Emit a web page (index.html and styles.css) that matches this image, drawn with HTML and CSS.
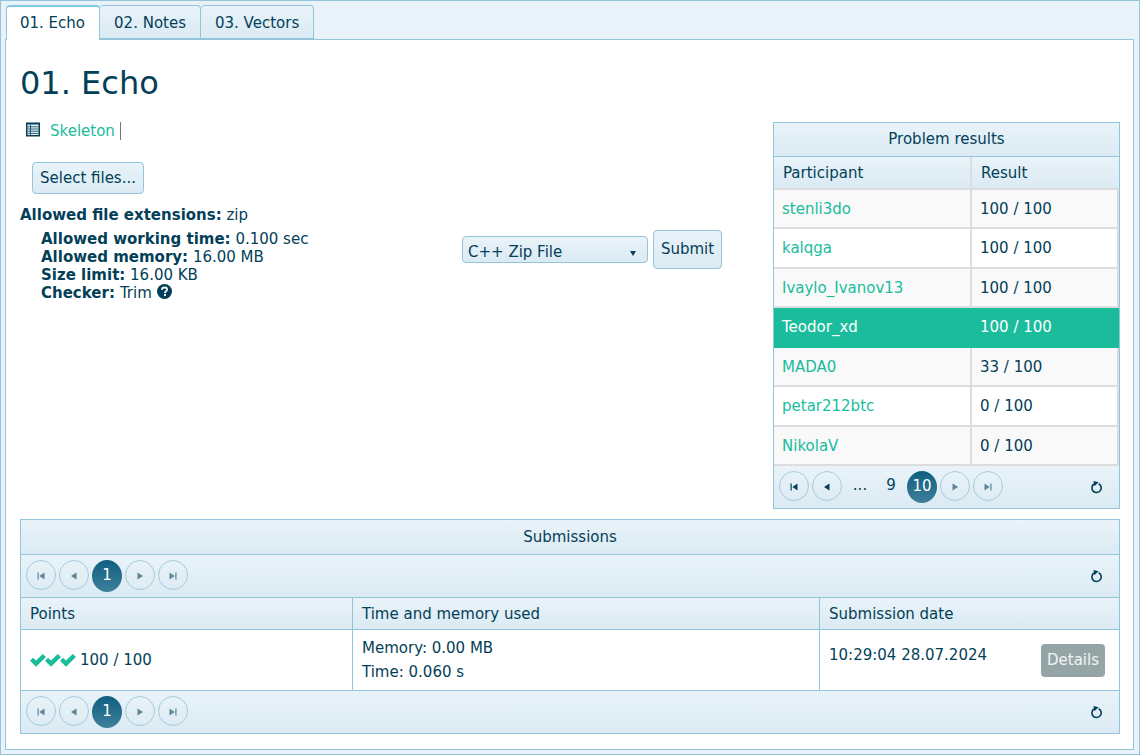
FILE: index.html
```html
<!DOCTYPE html>
<html lang="en">
<head>
<meta charset="utf-8">
<title>01. Echo</title>
<link rel="stylesheet" href="styles.css">
</head>
<body>
<svg class="defs" width="0" height="0" aria-hidden="true">
  <symbol id="i-first" viewBox="0 0 10 10"><path d="M1.5 1.5h1.2v7H1.5zM8.5 1.5v7L3.4 5z"/></symbol>
  <symbol id="i-prev" viewBox="0 0 10 10"><path d="M7.5 1.5v7L2 5z"/></symbol>
  <symbol id="i-next" viewBox="0 0 10 10"><path d="M2.5 1.5v7L8 5z"/></symbol>
  <symbol id="i-last" viewBox="0 0 10 10"><path d="M7.3 1.5h1.2v7H7.3zM1.5 1.5v7L6.6 5z"/></symbol>
  <symbol id="i-refresh" viewBox="0 0 12 12"><path d="M3.600 2.800A4.300 4.300 0 1 0 8 2.500" fill="none" stroke="currentColor" stroke-width="1.500"/><path d="M3.200 0 8 1.200 4 4.800z"/></symbol>
  <symbol id="i-check" viewBox="0 0 16 13"><path d="M0 6.800 3 3.800 6 6.600 12.800 0 16 3 6 12.800z"/></symbol>
</svg>
<div class="tabstrip">
  <ul class="tabs">
    <li class="tab tab-active">01. Echo</li>
    <li class="tab">02. Notes</li>
    <li class="tab">03. Vectors</li>
  </ul>
  <div class="panel">
    <h1 class="title">01. Echo</h1>
    <div class="top">
      <div class="left">
        <div class="resources">
          <svg class="doc-icon" width="14" height="15" viewBox="0 0 14 15"><rect x="0" y="0.5" width="14" height="14" fill="#033f58"/><rect x="1.500" y="2.500" width="11" height="10.500" fill="#e8eff2"/><path d="M1.500 4.800h11M1.500 7h11M1.500 9.200h11M1.500 11.400h11M4.500 2.500v10.500" stroke="#033f58" stroke-width="0.8" fill="none"/></svg>
          <a class="link skeleton" href="#">Skeleton</a>
        </div>
        <button class="btn select-btn" type="button">Select files...</button>
        <p class="ext"><b>Allowed file extensions:</b> zip</p>
        <div class="limits">
          <div><b>Allowed working time:</b> 0.100 sec</div>
          <div><b>Allowed memory:</b> 16.00 MB</div>
          <div><b>Size limit:</b> 16.00 KB</div>
          <div class="checker"><b>Checker:</b> Trim
            <svg class="help" width="15" height="15" viewBox="0 0 15 15"><circle cx="7.5" cy="7.5" r="7.5" fill="#033f58"/><path d="M5 5.8C5 4.3 6.1 3.5 7.6 3.5 9.100 3.500 10.100 4.300 10.100 5.600 10.100 7.300 8 7.200 8 8.900" fill="none" stroke="#fff" stroke-width="1.800"/><rect x="7" y="9.900" width="2" height="2" fill="#fff"/></svg>
          </div>
        </div>
      </div>
      <div class="submit-form">
        <div class="dropdown"><span>C++ Zip File</span><i class="caret"></i></div>
        <button class="btn submit-btn" type="button">Submit</button>
      </div>
      <section class="results">
        <div class="caption">Problem results</div>
        <div class="res-head"><div>Participant</div><div>Result</div></div>
        <div class="res-row odd"><a class="link" href="#">stenli3do</a><div>100 / 100</div></div>
        <div class="res-row"><a class="link" href="#">kalqga</a><div>100 / 100</div></div>
        <div class="res-row odd"><a class="link" href="#">Ivaylo_Ivanov13</a><div>100 / 100</div></div>
        <div class="res-row selected"><a class="link" href="#">Teodor_xd</a><div>100 / 100</div></div>
        <div class="res-row odd"><a class="link" href="#">MADA0</a><div>33 / 100</div></div>
        <div class="res-row"><a class="link" href="#">petar212btc</a><div>0 / 100</div></div>
        <div class="res-row odd"><a class="link" href="#">NikolaV</a><div>0 / 100</div></div>
        <div class="pager pager-res">
          <span class="pg"><svg><use href="#i-first"/></svg></span>
          <span class="pg"><svg><use href="#i-prev"/></svg></span>
          <span class="pg-num dots">...</span>
          <span class="pg-num nine">9</span>
          <span class="pg-cur">10</span>
          <span class="pg dim"><svg><use href="#i-next"/></svg></span>
          <span class="pg dim"><svg><use href="#i-last"/></svg></span>
          <svg class="refresh"><use href="#i-refresh"/></svg>
        </div>
      </section>
    </div>
    <section class="subs">
      <div class="caption subs-caption">Submissions</div>
      <div class="pager pager-sub">
        <span class="pg dim"><svg><use href="#i-first"/></svg></span>
        <span class="pg dim"><svg><use href="#i-prev"/></svg></span>
        <span class="pg-cur">1</span>
        <span class="pg dim"><svg><use href="#i-next"/></svg></span>
        <span class="pg dim"><svg><use href="#i-last"/></svg></span>
        <svg class="refresh"><use href="#i-refresh"/></svg>
      </div>
      <div class="sub-head"><div>Points</div><div>Time and memory used</div><div>Submission date</div></div>
      <div class="sub-row">
        <div class="points"><span class="checks"><svg><use href="#i-check"/></svg><svg><use href="#i-check"/></svg><svg><use href="#i-check"/></svg></span>100 / 100</div>
        <div class="usage"><div>Memory: 0.00 MB</div><div>Time: 0.060 s</div></div>
        <div class="date"><span>10:29:04 28.07.2024</span><button class="details" type="button">Details</button></div>
      </div>
      <div class="pager pager-sub pager-last">
        <span class="pg dim"><svg><use href="#i-first"/></svg></span>
        <span class="pg dim"><svg><use href="#i-prev"/></svg></span>
        <span class="pg-cur">1</span>
        <span class="pg dim"><svg><use href="#i-next"/></svg></span>
        <span class="pg dim"><svg><use href="#i-last"/></svg></span>
        <svg class="refresh"><use href="#i-refresh"/></svg>
      </div>
    </section>
  </div>
</div>
</body>
</html>
```
FILE: styles.css
```css
* { box-sizing: border-box; }
html, body { margin: 0; padding: 0; }
body {
  width: 1140px;
  height: 755px;
  overflow: hidden;
  background: #fff;
  color: #033f58;
  font: 15px/18px "DejaVu Sans", sans-serif;
}
.defs { position: absolute; }
.tabstrip {
  height: 755px;
  padding: 4px 5px 4px 4px;
  background: #e9f2f9;
  border: 1px solid #94c4da;
}
.tabs {
  display: flex;
  margin: 0;
  padding: 0;
  list-style: none;
  height: 34px;
}
.tab {
  height: 34px;
  padding: 8px 14px 0;
  border: 1px solid #94c4da;
  border-left-width: 0;
  border-radius: 4px 4px 0 0;
  background: linear-gradient(#e9f3f9, #dbeaf3);
  white-space: nowrap;
}
.tab-active {
  position: relative;
  z-index: 1;
  height: 35px;
  padding: 7px 14px 0 13px;
  margin-left: 1px;
  background: #fff;
  border-width: 2px 1px 0 1px;
  border-color: #82c6e8 #94c4da #fff;
}
.panel {
  height: 711px;
  padding: 0 14px;
  background: #fff;
  border: 1px solid #94c4da;
}
.title {
  margin: 0;
  padding-top: 24px;
  height: 82px;
  font-size: 32px;
  line-height: 38px;
  font-weight: 400;
}
.top {
  display: flex;
  height: 397px;
}
.left {
  width: 442px;
  flex: none;
}
.resources {
  display: flex;
  align-items: center;
  height: 17px;
  margin: 0 0 0 6px;
}
.doc-icon { flex: none; margin: -2px 10px 0 0; }
.link { color: #1abc9c; text-decoration: none; }
.skeleton {
  padding-right: 5px;
  border-right: 1px solid #777;
}
.btn {
  font: inherit;
  color: inherit;
  border: 1px solid #94c4da;
  border-radius: 4px;
  background: linear-gradient(#e9f3f9, #dbeaf3);
  padding: 0;
}
.select-btn {
  display: block;
  width: 112px;
  height: 32px;
  margin: 23px 0 0 12px;
}
.ext { margin: 12px 0 0; line-height: 18px; }
.limits { margin: 6px 0 0 21px; }
.checker { display: flex; align-items: center; gap: 5px; }
.help { flex: none; margin-bottom: 3px; }
.submit-form {
  width: 311px;
  flex: none;
  display: flex;
  align-items: center;
  align-self: flex-start;
  margin-top: 108px;
}
.dropdown {
  width: 186px;
  height: 27px;
  margin-right: 5px;
  padding: 4px 6px 0 5px;
  display: flex;
  justify-content: space-between;
  align-items: center;
  border: 1px solid #94c4da;
  border-radius: 4px;
  background: linear-gradient(#e9f3f9, #dbeaf3);
}
.caret {
  margin: 4px 5px 0 0;
  border: 3.5px solid transparent;
  border-top: 5px solid #033f58;
  border-bottom: 0;
}
.submit-btn { width: 69px; height: 39px; padding-bottom: 1px; }
.results {
  width: 347px;
  height: 387px;
  flex: none;
  border: 1px solid #94c4da;
}
.caption {
  height: 34px;
  line-height: 33px;
  text-align: center;
  border-bottom: 1px solid #94c4da;
  background: linear-gradient(#e9f3f9, #dbeaf3);
}
.res-head {
  display: grid;
  grid-template-columns: 198px 1fr;
  height: 32.5px;
  background: linear-gradient(#e9f3f9, #dbeaf3);
  border-bottom: 2px solid #ddd;
}
.res-head > div { padding: 7px 9px 0; }
.res-head > div:first-child { border-right: 2px solid #ddd; }
.res-row {
  display: grid;
  grid-template-columns: 198px 1fr;
  height: 39.5px;
  background: #fff;
  border-bottom: 2px solid #ddd;
}
.res-row.odd { background: #f9f9f9; }
.res-row > a, .res-row > div {
  padding: 2px 0 0 8px;
  line-height: 35.5px;
  border-right: 2px solid #ddd;
}
.res-row.selected { background: #1abc9c; color: #fff; border-color: #1abc9c; }
.res-row.selected > a { color: #fff; border-color: #1abc9c; }
.res-row.selected > div { border-color: #1abc9c; }
.pager {
  display: flex;
  align-items: flex-start;
  height: 42px;
  padding: 5px 17px 0 5px;
  gap: 3px;
  background: linear-gradient(#e9f3f9, #dbeaf3);
}
.pg {
  flex: none;
  width: 30px;
  height: 30px;
  display: flex;
  align-items: center;
  justify-content: center;
  border: 1px solid #a6cbdb;
  border-radius: 50%;
  color: #033f58;
  fill: #033f58;
}
.pg svg { width: 10px; height: 10px; margin-top: 2px; }
.pg.dim svg { opacity: .6; }
.pg-num {
  flex: none;
  width: 30px;
  height: 30px;
  line-height: 28px;
  text-align: center;
}
.nine { margin-left: -2px; margin-right: -2px; }
.pg-cur {
  flex: none;
  width: 30px;
  height: 32px;
  line-height: 31px;
  text-align: center;
  color: #fff;
  font-size: 15px;
  border-radius: 50%;
  background: linear-gradient(#0f5f80, #3f7f9b);
}
.refresh {
  width: 13px;
  height: 13px;
  margin: 10px -1px 0 auto;
  color: #033f58;
  fill: #033f58;
}
.subs {
  width: 1100px;
  height: 215px;
  border: 1px solid #94c4da;
  border-top-width: 2px;
}
.subs-caption { height: 35px; line-height: 34px; margin-top: -1px; }
.pager-sub {
  height: 43px;
  border-bottom: 1px solid #94c4da;
}
.pager-last { height: 42px; border-bottom: 0; }
.sub-head, .sub-row {
  display: grid;
  grid-template-columns: 332px 467px 1fr;
  border-bottom: 1px solid #94c4da;
}
.sub-head {
  height: 32px;
  background: linear-gradient(#e9f3f9, #dbeaf3);
}
.sub-head > div { padding: 7px 9px 0; }
.sub-head > div:not(:last-child), .sub-row > div:not(:last-child) { border-right: 1px solid #94c4da; }
.sub-row { height: 61px; }
.points { display: flex; align-items: center; padding-left: 9px; }
.checks { display: flex; margin-right: 5px; fill: #1abc9c; }
.checks svg { width: 16px; height: 13px; margin-right: -1px; }
.usage { padding: 6px 9px 0; line-height: 24px; }
.date {
  display: flex;
  justify-content: space-between;
  align-items: flex-start;
  padding: 16px 14px 0 9px;
}
.details {
  height: 33px;
  width: 64px;
  margin-top: -2px;
  padding: 0 0 2px;
  border: 0;
  border-radius: 4px;
  font: inherit;
  color: #f1f4f4;
  background: #95a5a6;
}
```
